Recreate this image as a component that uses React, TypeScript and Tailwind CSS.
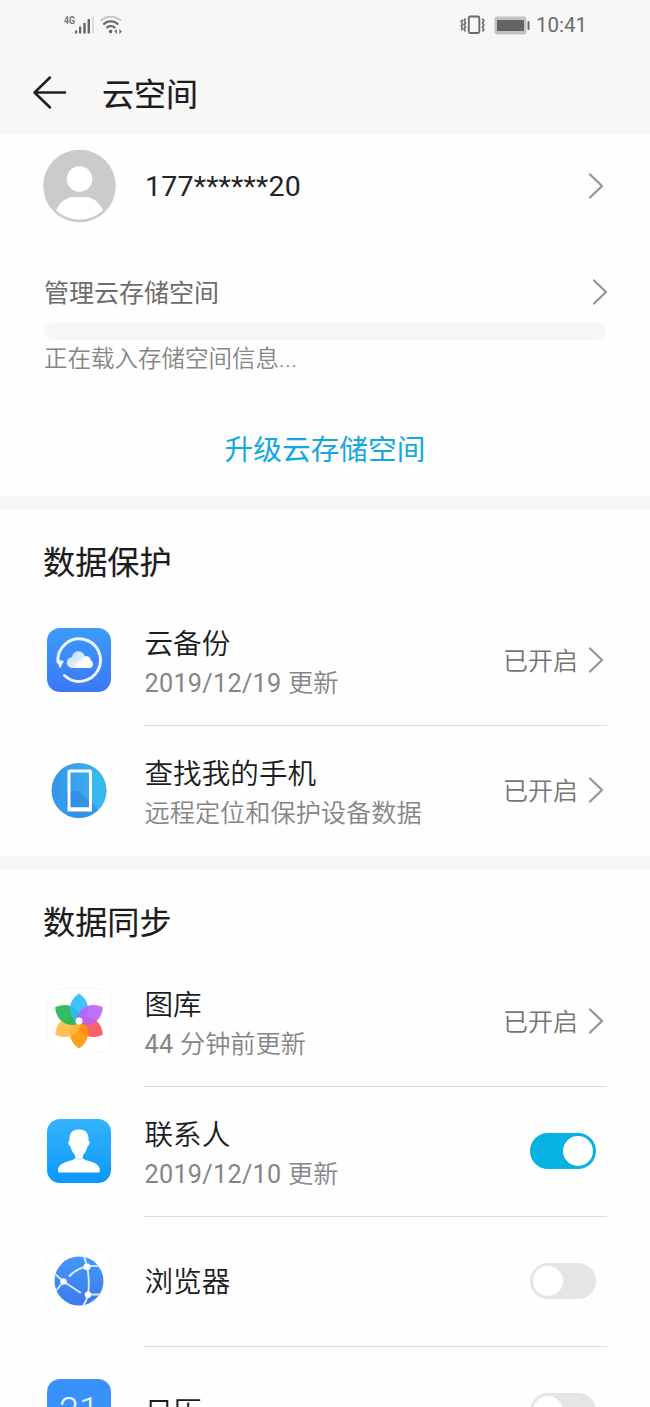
import React, { useState } from 'react';

const Chevron = () => (
  <svg width="16" height="28" viewBox="0 0 16 28" fill="none" stroke="#959595" strokeWidth="2.3" strokeLinecap="round" strokeLinejoin="round" className="shrink-0"><path d="M2 2.500l12 11.500L2 25.500" /></svg>
);

const StatusBar = () => (
  <div className="h-[50px] pl-16 pr-[63px] flex items-center justify-between text-[#6b6b6b]">
    <div className="flex items-center">
      <svg width="60" height="24" viewBox="0 0 60 24">
        <text x="0" y="10.5" fontSize="10.5" fontWeight="700" fill="#757575" textLength="11" lengthAdjust="spacingAndGlyphs">4G</text>
        <g fill="#666">
          <rect x="11" y="17.5" width="2.2" height="3" />
          <rect x="15" y="13.5" width="2.2" height="7" />
          <rect x="19.3" y="10" width="2.4" height="10.5" />
          <rect x="23.6" y="6" width="2.4" height="14.5" />
          <rect x="28" y="3" width="2" height="17.5" fill="#dcdcdc" />
        </g>
        <g fill="none" stroke="#666" strokeWidth="2">
          <path d="M36.500 7.800c6-5.400 14.500-5.400 20.500 0" stroke="#c6c6c6" strokeWidth="1.800" />
          <path d="M39.300 11.500c4.500-4.200 10.500-4.200 15 0" />
          <path d="M42.300 15c2.900-2.600 6.100-2.600 9 0" />
        </g>
        <circle cx="46.600" cy="18.500" r="1.700" fill="#5f5f5f" />
        <path d="M50.300 18.500l2.700-2.400v4.800zM58 18.500l-2.700-2.400v4.800z" fill="#777" />
      </svg>
    </div>
    <div className="flex items-center">
      <svg width="72" height="24" viewBox="0 0 72 24" fill="none">
        <rect x="8.800" y="3.500" width="10.500" height="16.500" rx="1.500" stroke="#6b6b6b" strokeWidth="1.900" />
        <path d="M5.500 5.500L4.200 7.700l1.300 2.200-1.300 2.200 1.300 2.200-1.300 2.200 1.300 2M2.500 6.500L1.300 8.700l1.200 2.200-1.200 2.200 1.200 2.200-1.200 2M22.500 5.500l1.300 2.200-1.300 2.200 1.300 2.200-1.300 2.200 1.300 2.200-1.300 2" stroke="#707070" strokeWidth="1.700" />
        <rect x="34.500" y="3.500" width="32" height="18" rx="3" fill="#c2c2c2" />
        <rect x="37" y="7" width="27" height="11" fill="#636363" />
        <rect x="67.500" y="8" width="2" height="9" rx="1" fill="#6b6b6b" />
      </svg>
      <span className="ml-[4px] text-[20.500px] leading-6">10:41</span>
    </div>
  </div>
);

const BackupIcon = () => (
  <svg width="66" height="66" viewBox="0 0 66 66">
    <defs>
      <linearGradient id="backup" x1="0" y1="0" x2="0" y2="1"><stop stopColor="#3b9bfa" /><stop offset="1" stopColor="#3c78f5" /></linearGradient>
      <linearGradient id="cloud" x1="0" y1="0" x2="1" y2="1"><stop stopColor="#b9d8fc" /><stop offset="1" stopColor="#fff" /></linearGradient>
    </defs>
    <rect x="1" y="1" width="64" height="64" rx="13" fill="url(#backup)" />
    <path d="M18.500 48.500A21.300 21.300 0 1 0 12 35" fill="none" stroke="#eaf3ff" strokeWidth="3" strokeLinecap="round" />
    <path d="M10.500 32.500l7.500 1.500-4 7.500z" fill="#eaf3ff" />
    <path d="M27 41c-8 0-8-10.500-1-10.800 1-7.500 11-7.700 12.700-1.200C43 28.500 45 31 44.500 33c4 2 3 8-1.500 8z" fill="url(#cloud)" />
    <path d="M31 41c-2-5 2-7.500 4.500-7 1.500-5.500 8.500-4.500 9 .300 3.500 1.200 3 6.700-1.500 6.700z" fill="#fff" />
  </svg>
);

const PhoneIcon = () => (
  <svg width="66" height="66" viewBox="0 0 66 66">
    <defs>
      <linearGradient id="find" x1="0" y1="0" x2="1" y2="0"><stop stopColor="#3491ea" /><stop offset="1" stopColor="#3cb9f0" /></linearGradient>
      <clipPath id="findClip"><circle cx="33" cy="33.500" r="27.500" /></clipPath>
    </defs>
    <rect x="1" y="1" width="64" height="64" rx="13" fill="#fff" stroke="#fafafa" />
    <g clipPath="url(#findClip)">
      <rect width="66" height="66" fill="url(#find)" />
      <path d="M20 66V34h13l21 21-6 11z" fill="#2f7fe4" opacity="0.550" />
      <path d="M45 15l21-2v40L45 44z" fill="#35bdf0" opacity="0.600" />
    </g>
    <rect x="23" y="14" width="21.500" height="38" rx="1" fill="none" stroke="#fff" strokeWidth="3" />
    <path d="M21.500 52.500h24.500" stroke="#fff" strokeWidth="4" />
  </svg>
);

const petals = [
  { color: '#f9525c', angle: 120 },
  { color: '#ff9604', angle: 180 },
  { color: '#fdb944', angle: 240 },
  { color: '#22b455', angle: 300 },
  { color: '#2bbcfb', angle: 0 },
  { color: '#b961f5', angle: 60 },
];

const GalleryIcon = () => (
  <svg width="66" height="66" viewBox="0 0 66 66">
    <rect x="1" y="1" width="64" height="64" rx="13" fill="#fff" stroke="#f7f7f7" />
    {petals.map((p) => (
      <path key={p.angle} d="M33 34.500C25 33 17.500 16 33 5.500 48.500 16 41 33 33 34.500z" fill={p.color} opacity="0.900" transform={`rotate(${p.angle} 33 33)`} />
    ))}
    <circle cx="33" cy="33" r="3.500" fill="#fff" />
  </svg>
);

const ContactIcon = () => (
  <svg width="66" height="66" viewBox="0 0 66 66">
    <defs>
      <linearGradient id="contact" x1="0" y1="0" x2="0" y2="1"><stop stopColor="#35b3fc" /><stop offset="1" stopColor="#0b98fb" /></linearGradient>
    </defs>
    <rect x="1" y="1" width="64" height="64" rx="13" fill="url(#contact)" />
    <path d="M33 11.500c7.500 0 10 4.500 9.500 11 2 .500 1 5-1 6-1 4-2.500 6.500-4.500 8.500v3.500c3 3 17 3 17 12 0 1.500-.500 2-2 2H14c-1.500 0-2-.500-2-2 0-9 14-9 17-12V37c-2-2-3.500-4.500-4.500-8.500-2-1-3-5.500-1-6-.500-6.500 2-11 9.500-11z" fill="#fff" />
    <path d="M29 38.500c2.500 2 5.500 2 8 0v2.500c-2.500 1.500-5.500 1.500-8 0z" fill="#d9effd" />
  </svg>
);

const BrowserIcon = () => (
  <svg width="66" height="66" viewBox="0 0 66 66">
    <defs>
      <linearGradient id="globe" x1="0" y1="0" x2="0" y2="1"><stop stopColor="#4398f8" /><stop offset="1" stopColor="#3b7bee" /></linearGradient>
      <clipPath id="globeClip"><circle cx="33" cy="33" r="24.500" /></clipPath>
    </defs>
    <rect x="1" y="1" width="64" height="64" rx="13" fill="#fff" stroke="#f9f9f9" />
    <circle cx="33" cy="33" r="24.500" fill="url(#globe)" />
    <g clipPath="url(#globeClip)" stroke="#d8eaff" strokeWidth="1.900" fill="none">
      <path d="M8 25l9.500 8.500M17.500 33.500L9 44M17.500 33.500L35 45M23 28.500C28 23 34 20 41 18.500M41 18.500L38 8M41 18.500c6-1 11-1 17 1M41 18.500c2 9 2.500 18 1 28M42 46.500h16M42 46.500c-1 5-3 9-6 13" />
      <g fill="#fff" stroke="none"><circle cx="17.500" cy="33.500" r="3.200" /><circle cx="41" cy="18.700" r="3.500" /><circle cx="42" cy="46.700" r="3.200" /></g>
    </g>
  </svg>
);

const CalendarIcon = () => (
  <svg width="66" height="66" viewBox="0 0 66 66">
    <rect x="1" y="1" width="64" height="64" rx="13" fill="#3992f9" />
    <text x="33" y="45" textAnchor="middle" fontSize="36" fontWeight="300" fill="#eef6ff">21</text>
  </svg>
);

interface RowProps {
  icon: React.ReactNode;
  title: string;
  stamp?: string;
  desc?: string;
  last?: boolean;
  children: React.ReactNode;
}

const Row: React.FC<RowProps> = ({ icon, title, stamp, desc, last, children }) => (
  <div className="h-[130px] pl-[46px] pr-[43px] flex shrink-0">
    <div className="w-[66px] mr-8 pb-[2px] h-full flex items-center shrink-0">{icon}</div>
    <div className={`flex-1 pb-px flex items-center justify-between border-b ${last ? 'border-transparent' : 'border-[#dcdcdc]'}`}>
      <div className={desc ? 'pt-[8px] pl-[0.500px]' : 'pt-[2px] pl-[0.500px]'}>
        <h3 className="text-[28.600px] leading-10 font-[350] text-[#1c1c1c]">{title}</h3>
        {desc && (
          <p className="text-[25.200px] leading-10 font-[350] text-[#858585]">
            {stamp && <span className="font-normal tracking-[0.300px]">{stamp} </span>}
            {desc}
          </p>
        )}
      </div>
      {children}
    </div>
  </div>
);

const Opened = () => (
  <div className="flex items-center gap-[10px] pr-[3px] text-[25px] font-[350] text-[#757575]">
    <span className="leading-10 pt-[3px]">已开启</span>
    <Chevron />
  </div>
);

const Switch: React.FC<{ initial?: boolean }> = ({ initial = false }) => {
  const [on, setOn] = useState(initial);
  return (
    <button
      role="switch"
      aria-checked={on}
      onClick={() => setOn(!on)}
      className={`w-[66px] h-9 mr-[11px] px-[3px] rounded-full flex items-center ${on ? 'bg-[#06b3e0] justify-end' : 'bg-[#e5e5e5] justify-start'}`}
    >
      <span className="w-[30px] h-[30px] rounded-full bg-white" />
    </button>
  );
};

const SectionTitle: React.FC<{ children: React.ReactNode }> = ({ children }) => (
  <h2 className="pt-[34px] pl-[43px] text-[32.200px] leading-10 font-normal text-[#1c1c1c] [-webkit-text-stroke:0.150px_#1c1c1c]">{children}</h2>
);

const App: React.FC = () => {
  return (
    <div className="w-full h-[1407px] overflow-hidden flex flex-col bg-[#fefefe] font-[Roboto,'Noto_Sans_CJK_SC',sans-serif]">
      <header className="h-[135px] shrink-0 bg-[#f7f7f7]">
        <StatusBar />
        <div className="h-[85px] pl-8 flex items-center">
          <svg width="36" height="36" viewBox="0 0 36 36" fill="none" stroke="#1f1f1f" strokeWidth="2.500" strokeLinecap="round" strokeLinejoin="round"><path d="M33 17.500H2.500M18 2.500l-15.500 15 15.500 15" /></svg>
          <h1 className="ml-[34px] pt-[4px] text-[32px] leading-10 font-normal text-[#1c1c1c] [-webkit-text-stroke:0.200px_#1c1c1c]">云空间</h1>
        </div>
      </header>

      <section className="h-[361px] shrink-0">
        <div className="h-[102px] pl-[43px] pr-[46px] flex items-center">
          <svg width="73" height="73" viewBox="0 0 73 73">
            <circle cx="36.500" cy="36" r="36.300" fill="#cbcbcb" />
            <circle cx="36.500" cy="29" r="12.800" fill="#fff" />
            <path d="M13 60.500c3.500-8.500 11-13.500 17-13.500h13c6 0 13.500 5 17 13.500A35 35 0 0 1 13 60.500z" fill="#fff" />
          </svg>
          <span className="ml-[29px] pt-[2px] flex-1 text-[28.500px] leading-10 tracking-[0.200px] text-[#242424]">177******20</span>
          <Chevron />
        </div>
        <div className="pl-11 pr-11">
          <div className="mt-[35px] h-10 flex items-center justify-between -mr-[2px]">
            <span className="pt-[4px] text-[25px] leading-10 font-normal text-[#6c6c6c]">管理云存储空间</span>
            <Chevron />
          </div>
          <div className="mt-[11px] h-[17px] rounded-full bg-[#f6f6f6]" />
          <p className="mt-[3px] text-[23.500px] leading-8 font-[350] text-[#858585]">正在载入存储空间信息<span className="tracking-[0.600px]">...</span></p>
        </div>
        <button className="mt-[55px] w-full text-center text-[28.700px] leading-10 text-[#12a9de]">升级云存储空间</button>
      </section>

      <section className="h-[360px] shrink-0 border-t-[13px] border-[#f6f6f6]">
        <div className="h-[87px]"><SectionTitle>数据保护</SectionTitle></div>
        <Row icon={<BackupIcon />} title="云备份" stamp="2019/12/19" desc="更新"><Opened /></Row>
        <Row icon={<PhoneIcon />} title="查找我的手机" desc="远程定位和保护设备数据" last><Opened /></Row>
      </section>

      <section className="shrink-0 border-t-[13px] border-[#f6f6f6]">
        <div className="h-[88px]"><SectionTitle>数据同步</SectionTitle></div>
        <Row icon={<GalleryIcon />} title="图库" stamp="44" desc="分钟前更新"><Opened /></Row>
        <Row icon={<ContactIcon />} title="联系人" stamp="2019/12/10" desc="更新"><Switch initial /></Row>
        <Row icon={<BrowserIcon />} title="浏览器"><Switch /></Row>
        <Row icon={<CalendarIcon />} title="日历" last><Switch /></Row>
      </section>
    </div>
  );
};

export default App;
